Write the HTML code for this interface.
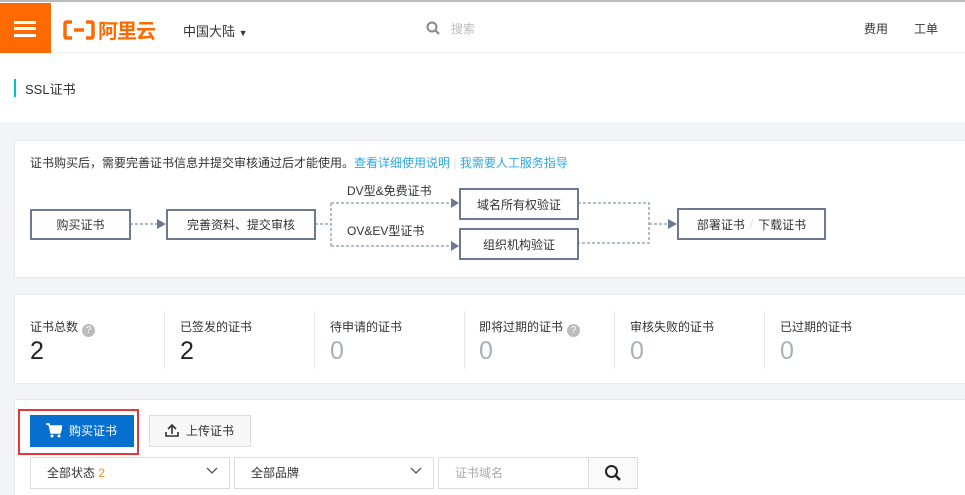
<!DOCTYPE html>
<html style="width:965px;height:495px;overflow:hidden"><head><meta charset="utf-8"><style>
*{box-sizing:border-box;margin:0;padding:0}
body{width:965px;height:495px;overflow:hidden;background:#f3f4f7;font-family:"Liberation Sans","Noto Sans CJK SC",sans-serif;font-size:12px;color:#333;position:relative}
.a{position:absolute}
.box{position:absolute;border:2px solid #6b7a92;background:#fff;display:flex;align-items:center;justify-content:center;font-size:12px;color:#333}
.lab{font-size:12px;color:#333}
.num{font-size:25px;color:#222}
.g{color:#aab0b8}
.q{display:inline-block;width:13px;height:13px;border-radius:50%;background:#bbb;color:#fff;font-size:10px;line-height:13px;text-align:center;vertical-align:-2px;margin-left:4px}
.div{position:absolute;top:311px;width:1px;height:58px;background:#e5e5e5}
.sel{position:absolute;top:457px;height:32px;border:1px solid #ddd;background:#fff;padding-left:16px;line-height:30px;font-size:12px}
</style></head><body>
<div class="a" style="left:0;top:0;width:965px;height:2px;background:#bbb"></div>
<div class="a" style="left:0;top:2px;width:965px;height:120px;background:#fff"></div>
<div class="a" style="left:0;top:52px;width:965px;height:2px;background:linear-gradient(#eee,#fff)"></div>
<div class="a" style="left:0;top:3px;width:51px;height:50px;background:#ff6a00"></div>
<div class="a" style="left:14px;top:21px;width:22px;height:3px;background:#fff"></div>
<div class="a" style="left:14px;top:27px;width:22px;height:3px;background:#fff"></div>
<div class="a" style="left:14px;top:34px;width:22px;height:3px;background:#fff"></div>
<svg class="a" style="left:63px;top:19px" width="32" height="22"><path d="M9 3H4Q2 3 2 5V17Q2 19 4 19H9M23 3H28Q30 3 30 5V17Q30 19 28 19H23M11 11H21" fill="none" stroke="#ff6a00" stroke-width="3.5"/></svg>
<div class="a" style="left:98px;top:15px;font-size:20px;font-weight:bold;color:#ff6a00;letter-spacing:-1px">阿里云</div>
<div class="a" style="left:183px;top:21px;font-size:13px;color:#333">中国大陆 <span style="font-size:9px">▼</span></div>
<svg class="a" style="left:426px;top:21px" width="14" height="14"><circle cx="6" cy="6" r="4.5" fill="none" stroke="#888" stroke-width="2"/><path d="M9.5 9.5L13 13" stroke="#888" stroke-width="2.2"/></svg>
<div class="a" style="left:451px;top:20px;font-size:12px;color:#bbb">搜索</div>
<div class="a" style="left:864px;top:20px;font-size:12px;color:#333">费用</div>
<div class="a" style="left:914px;top:20px;font-size:12px;color:#333">工单</div>
<div class="a" style="left:14px;top:79px;width:2px;height:18px;background:#00c1de"></div>
<div class="a" style="left:25px;top:79px;font-size:13px;color:#333">SSL证书</div>

<div class="a" style="left:14px;top:140px;width:951px;height:138px;background:#fff;border:1px solid #e8e9ec;border-right:none"></div>
<div class="a" style="left:30px;top:154px;font-size:12px;color:#333">证书购买后，需要完善证书信息并提交审核通过后才能使用。<span style="color:#2ea7e0">查看详细使用说明</span><span style="color:#ddd"> | </span><span style="color:#2ea7e0">我需要人工服务指导</span></div>
<svg class="a" style="left:0;top:180px" width="965" height="90">
<g fill="none" stroke="#9aa5b8" stroke-width="1.5" stroke-dasharray="3 2">
<path d="M130 44H158"/><path d="M315 44H331M331 23V66M331 23H450M331 66H450"/>
<path d="M578 23H649V63H578M649 44H668"/></g>
<g fill="#6b7a92"><path d="M157 39L166 44L157 49Z"/><path d="M451 18L459 23L451 28Z"/><path d="M451 61L459 66L451 71Z"/><path d="M668 39L677 44L668 49Z"/></g>
</svg>
<div class="box" style="left:30px;top:209px;width:101px;height:31px">购买证书</div>
<div class="box" style="left:166px;top:209px;width:150px;height:31px">完善资料、提交审核</div>
<div class="a lab" style="left:347px;top:182px">DV型&amp;免费证书</div>
<div class="a lab" style="left:347px;top:222px">OV&amp;EV型证书</div>
<div class="box" style="left:459px;top:188px;width:120px;height:32px">域名所有权验证</div>
<div class="box" style="left:459px;top:228px;width:120px;height:32px">组织机构验证</div>
<div class="box" style="left:677px;top:208px;width:149px;height:32px">部署证书 <span style="color:#ddd;margin:0 5px">/</span> 下载证书</div>

<div class="a" style="left:14px;top:294px;width:951px;height:90px;background:#fff;border:1px solid #e8e9ec;border-right:none"></div>
<div class="div" style="left:164px"></div><div class="div" style="left:314px"></div><div class="div" style="left:464px"></div><div class="div" style="left:614px"></div><div class="div" style="left:764px"></div>
<div class="a lab" style="left:30px;top:318px">证书总数<span class="q">?</span></div><div class="a num" style="left:30px;top:337px">2</div>
<div class="a lab" style="left:180px;top:318px">已签发的证书</div><div class="a num" style="left:180px;top:337px">2</div>
<div class="a lab" style="left:330px;top:318px">待申请的证书</div><div class="a num g" style="left:330px;top:337px">0</div>
<div class="a lab" style="left:479px;top:318px">即将过期的证书<span class="q">?</span></div><div class="a num g" style="left:479px;top:337px">0</div>
<div class="a lab" style="left:630px;top:318px">审核失败的证书</div><div class="a num g" style="left:630px;top:337px">0</div>
<div class="a lab" style="left:780px;top:318px">已过期的证书</div><div class="a num g" style="left:780px;top:337px">0</div>

<div class="a" style="left:14px;top:399px;width:951px;height:96px;background:#fff;border:1px solid #e8e9ec;border-right:none;border-bottom:none"></div>
<div class="a" style="left:18px;top:409px;width:121px;height:46px;border:2px solid #e5373a"></div>
<div class="a" style="left:30px;top:415px;width:104px;height:32px;background:#0770cf;color:#fff;font-size:12px;line-height:32px;padding-left:39px">购买证书</div>
<svg class="a" style="left:46px;top:423px" width="16" height="15"><path d="M0 1H3L5 10H14L16 3H4" fill="#fff" stroke="#fff" stroke-width="1.5"/><circle cx="6" cy="13" r="1.5" fill="#fff"/><circle cx="13" cy="13" r="1.5" fill="#fff"/></svg>
<div class="a" style="left:149px;top:415px;width:102px;height:32px;background:#f7f7f7;border:1px solid #ddd;line-height:30px;padding-left:36px;font-size:12px">上传证书</div>
<svg class="a" style="left:165px;top:423px" width="14" height="14"><path d="M7 11V2M3 6L7 2L11 6M1 9V13H13V9" fill="none" stroke="#333" stroke-width="1.6"/></svg>
<div class="sel" style="left:30px;width:200px">全部状态 <span style="color:#f08a24">2</span></div>
<div class="sel" style="left:234px;width:200px">全部品牌</div>
<svg class="a" style="left:206px;top:467px" width="12" height="8"><path d="M1 1L6 6L11 1" fill="none" stroke="#555" stroke-width="1.3"/></svg>
<svg class="a" style="left:410px;top:467px" width="12" height="8"><path d="M1 1L6 6L11 1" fill="none" stroke="#555" stroke-width="1.3"/></svg>
<div class="sel" style="left:438px;width:151px;color:#aaa">证书域名</div>
<div class="a" style="left:588px;top:457px;width:50px;height:32px;border:1px solid #ddd;background:#fafafa"></div>
<svg class="a" style="left:604px;top:464px" width="18" height="18"><circle cx="7.5" cy="7.5" r="5.5" fill="none" stroke="#222" stroke-width="2"/><path d="M11.5 11.5L16 16" stroke="#222" stroke-width="2.4"/></svg>
</body></html>
